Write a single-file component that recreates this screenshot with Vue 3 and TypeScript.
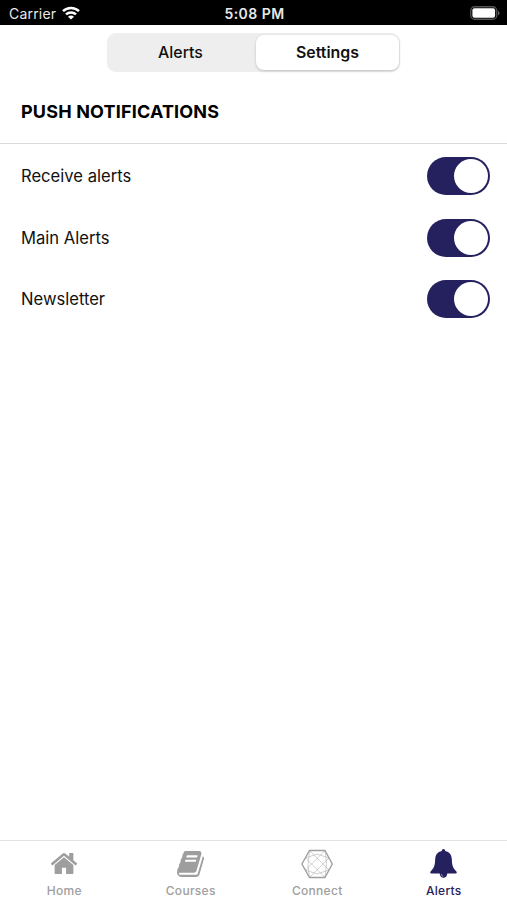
<script setup lang="ts">
import { ref } from 'vue'

interface Preference {
  label: string
  enabled: boolean
}

const segments: string[] = ['Alerts', 'Settings']
const activeSegment = ref('Settings')

const preferences = ref<Preference[]>([
  { label: 'Receive alerts', enabled: true },
  { label: 'Main Alerts', enabled: true },
  { label: 'Newsletter', enabled: true },
])

const tabs: string[] = ['Home', 'Courses', 'Connect', 'Alerts']
const activeTab = ref('Alerts')
</script>

<template>
  <div class="screen">
    <header class="status">
      <div class="carrier">
        <span>Carrier</span>
        <svg class="wifi" viewBox="0 0 18 14" fill="none" stroke="#fff" stroke-width="2.5">
          <path d="M1 5.2C5.4.9 12.600.9 17 5.200" />
          <path d="M4 8.400c2.800-2.700 7.200-2.700 10 0" />
          <path d="M9 13.600 6 10.700c1.700-1.500 4.300-1.500 6 0z" fill="#fff" stroke="none" />
        </svg>
      </div>
      <span class="time">5:08 PM</span>
      <svg class="battery" viewBox="0 0 30 14">
        <rect x=".75" y=".75" width="26" height="12.500" rx="3.800" fill="none" stroke="#555" stroke-width="1.300" />
        <rect x="2.400" y="2.300" width="22.700" height="9.400" rx="2" fill="#fff" />
        <path d="M28 4.700c2 .8 2 3.800 0 4.600z" fill="#666" />
      </svg>
    </header>

    <div class="segmented">
      <button
        v-for="segment in segments"
        :key="segment"
        class="segment"
        :class="{ selected: segment === activeSegment }"
        @click="activeSegment = segment"
      >
        {{ segment }}
      </button>
    </div>

    <h1 class="heading">PUSH NOTIFICATIONS</h1>

    <main class="list">
      <div v-for="item in preferences" :key="item.label" class="row">
        <span class="label">{{ item.label }}</span>
        <button
          class="toggle"
          :class="{ on: item.enabled }"
          role="switch"
          :aria-checked="item.enabled"
          @click="item.enabled = !item.enabled"
        >
          <span class="knob"></span>
        </button>
      </div>
    </main>

    <nav class="tabs">
      <button
        v-for="tab in tabs"
        :key="tab"
        class="tab"
        :class="{ current: tab === activeTab }"
        @click="activeTab = tab"
      >
        <span class="icon">
          <svg v-if="tab === 'Home'" width="26" height="21" viewBox="97 253 1598 1283" fill="currentColor">
            <path d="M1472 992v480q0 26-19 45t-45 19h-384v-384h-256v384h-384q-26 0-45-19t-19-45v-480q0-1 .5-3t.5-3l575-474 575 474q1 2 1 6zm223-69l-62 74q-8 9-21 11h-3q-13 0-21-7l-692-577-692 577q-12 8-24 7-13-2-21-11l-62-74q-8-10-7-23.500t11-21.500l719-599q32-26 76-26t76 26l244 204v-195q0-14 9-23t23-9h192q14 0 23 9t9 23v408l219 182q10 8 11 21.500t-7 23.500z" />
          </svg>
          <svg v-else-if="tab === 'Courses'" width="27" height="26" viewBox="64 128 1664 1536" preserveAspectRatio="none" fill="currentColor">
            <path d="M1703 478q40 57 18 129l-275 906q-19 64-76.500 107.500t-122.500 43.500h-923q-77 0-148.500-53.500t-99.500-131.500q-24-67-2-127 0-4 3-27t4-37q1-8-3-21.500t-3-19.500q2-11 8-21t16.500-23.500 16.500-23.500q23-38 45-91.500t30-91.500q3-10 .5-30t-.5-28q3-11 17-28t17-23q21-36 42-92t25-90q1-9-2.500-32t.5-28q4-13 22-30.500t22-22.500q19-26 42.500-84.500t27.500-96.500q1-8-3-25.500t-2-26.500q2-8 9-18t18-23 17-21q8-12 16.500-30.500t15-35 16-36 19.500-32 26.500-23.500 36-11.500 47.500 5.500l-1 3q38-9 51-9h761q74 0 114 56t18 130l-274 906q-36 119-71.500 153.500t-128.500 34.500h-869q-27 0-38 15-11 16-1 43 24 70 144 70h923q29 0 56-15.500t35-41.500l300-987q7-22 5-57 38 15 59 43zm-1064 2q-4 13 2 22.500t20 9.500h608q13 0 25.500-9.500t16.500-22.500l21-64q4-13-2-22.500t-20-9.500h-608q-13 0-25.500 9.500t-16.500 22.500zm-83 256q-4 13 2 22.500t20 9.500h608q13 0 25.500-9.500t16.500-22.500l21-64q4-13-2-22.500t-20-9.500h-608q-13 0-25.500 9.500t-16.500 22.500z" />
          </svg>
          <svg v-else-if="tab === 'Connect'" width="32" height="30" viewBox="0 0 32 30" fill="none" stroke="currentColor" stroke-linejoin="round">
            <path d="M8.500 1.500h15.500L31.300 15 24 28.500H8.500L.9 15z" stroke-width="1.400" />
            <path d="M8.500 1.500 28 21M24 1.500 4.600 21M8.500 28.500 28 9M24 28.500 4.600 9M8.500 1.500 7 17l1.500 11.500M24 1.500 25.500 14 24 28.500M4.600 9 16 5l12 4M4.600 21 16 25l12-4" stroke-width=".65" opacity=".75" />
          </svg>
          <svg v-else width="27" height="29" viewBox="0 0 27 29" fill="currentColor">
            <path d="M13.500 0c1.100 0 1.700.7 1.700 1.900 4.400.9 6.400 4 6.600 8.200.2 5.600.8 9 4.600 12.300.5.500.6 2-.6 2h-8.500c-.2 2.600-1.700 4.300-3.800 4.300s-3.600-1.700-3.800-4.300H1.200c-1.200 0-1.100-1.500-.6-2 3.800-3.300 4.400-6.700 4.600-12.300.2-4.200 2.200-7.300 6.600-8.200 0-1.200.6-1.900 1.700-1.900z" />
            <path d="M11.300 25c.2 1.500.9 2.200 2 2.400" fill="none" stroke="#fff" stroke-width=".5" />
          </svg>
        </span>
        <span class="tab-label">{{ tab }}</span>
      </button>
    </nav>
  </div>
</template>

<style>
body {
  margin: 0;
  background: #fff;
}
</style>

<style scoped>
.screen {
  display: flex;
  flex-direction: column;
  height: 900px;
  background: #fff;
  color: #111;
  font-family: Inter, sans-serif;
}

button {
  margin: 0;
  padding: 0;
  border: 0;
  background: none;
  color: inherit;
  font-family: inherit;
}

.status {
  display: grid;
  grid-template-columns: 1fr auto 1fr;
  align-items: center;
  box-sizing: border-box;
  height: 25px;
  padding: 2px 7px 0 9px;
  background: #000;
  color: #e8e8e8;
  font-size: 14px;
  line-height: 22px;
}

.carrier {
  display: flex;
  align-items: center;
  gap: 6px;
  letter-spacing: 0.2px;
}

.wifi {
  width: 18px;
  height: 14px;
  margin-top: -2px;
}

.time {
  font-weight: 600;
  letter-spacing: 0.45px;
}

.battery {
  justify-self: end;
  width: 30px;
  height: 14px;
  margin-top: -1px;
}

.segmented {
  display: grid;
  grid-template-columns: 145px 143px;
  gap: 3px;
  box-sizing: border-box;
  width: 293px;
  height: 39px;
  margin: 8px 0 0 107px;
  padding: 2px 1px 2px 1px;
  border-radius: 9px;
  background: #eee;
}

.segment {
  height: 35px;
  padding-bottom: 1px;
  border-radius: 8px;
  font-size: 15.900px;
  font-weight: 500;
}

.selected {
  background: #fff;
  box-shadow: 0 1px 3px rgba(0, 0, 0, 0.2);
  font-weight: 600;
}

.heading {
  box-sizing: border-box;
  height: 72px;
  margin: 0;
  padding: 27px 21px 0;
  border-bottom: 1px solid #dadada;
  color: #000;
  font-size: 18px;
  font-weight: 700;
  line-height: 25px;
  letter-spacing: 0.17px;
}

.list {
  display: flex;
  flex: 1;
  flex-direction: column;
  gap: 23.700px;
  padding: 13px 17px 0 21px;
}

.row {
  display: flex;
  align-items: center;
  justify-content: space-between;
  height: 38px;
}

.label {
  font-size: 16.600px;
}

.toggle {
  display: flex;
  align-items: center;
  box-sizing: border-box;
  width: 63px;
  height: 38px;
  padding: 2px;
  border-radius: 19px;
  background: #ddd;
}

.toggle.on {
  justify-content: flex-end;
  background: #25215f;
}

.knob {
  width: 34px;
  height: 34px;
  border-radius: 50%;
  background: #fff;
}

.tabs {
  display: grid;
  grid-template-columns: repeat(4, 1fr);
  box-sizing: border-box;
  height: 60px;
  padding-left: 1px;
  border-top: 1px solid #e2e2e2;
}

.tab {
  display: flex;
  flex-direction: column;
  align-items: center;
  padding-top: 7px;
  color: #9e9e9e;
}

.icon {
  display: flex;
  align-items: center;
  justify-content: center;
  height: 31px;
}

.tab-label {
  margin-top: 4px;
  font-size: 12px;
  font-weight: 500;
  line-height: 16px;
  letter-spacing: 0.3px;
}

.current {
  color: #25215f;
}
</style>
